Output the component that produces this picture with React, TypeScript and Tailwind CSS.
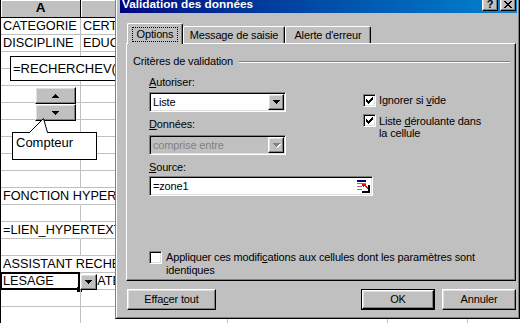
import React from "react";

const raised =
  "bg-[#c0c0c0] border border-t-white border-l-white border-r-black border-b-black shadow-[inset_-1px_-1px_#808080,inset_1px_1px_#dfdfdf]";
const sunken =
  "border border-t-[#808080] border-l-[#808080] border-r-white border-b-white shadow-[inset_1px_1px_#000,inset_-1px_-1px_#dfdfdf]";

type Row = { a?: string; b?: string; span?: boolean; sel?: boolean };

const rows: Row[] = [
  { a: "CATEGORIE", b: "CERT" },
  { a: "DISCIPLINE", b: "EDUC" },
  {},
  {},
  {},
  {},
  {},
  {},
  {},
  {},
  { a: "FONCTION HYPER", span: true },
  {},
  { a: "=LIEN_HYPERTEXT", span: true },
  {},
  { a: "ASSISTANT RECHE", span: true },
  { a: "LESAGE", b: "CATE", sel: true },
  {},
  {},
];

function DownTri({ color = "#000" }: { color?: string }) {
  return (
    <svg width="7" height="4" viewBox="0 0 7 4" shapeRendering="crispEdges">
      <path d="M0 0h7v1h-7zM1 1h5v1h-5zM2 2h3v1h-3zM3 3h1v1h-1z" fill={color} />
    </svg>
  );
}

function UpTri() {
  return (
    <svg width="7" height="4" viewBox="0 0 7 4" shapeRendering="crispEdges">
      <path d="M3 0h1v1h-1zM2 1h3v1h-3zM1 2h5v1h-5zM0 3h7v1h-7z" fill="#000" />
    </svg>
  );
}

function Check() {
  return (
    <svg width="7" height="7" viewBox="0 0 7 7" shapeRendering="crispEdges">
      <path
        d="M6 0h1v1h-1zM5 1h2v1h-2zM0 2h1v1h-1zM4 2h3v1h-3zM0 3h2v1h-2zM3 3h3v1h-3zM0 4h5v1h-5zM1 5h3v1h-3zM2 6h1v1h-1z"
        fill="#000"
      />
    </svg>
  );
}

function CheckBox({ on }: { on?: boolean }) {
  return (
    <div className={`w-[13px] h-[13px] shrink-0 bg-white flex items-center justify-center ${sunken}`}>
      {on && <Check />}
    </div>
  );
}

function RefIcon() {
  return (
    <svg width="15" height="15" viewBox="0 0 15 15" shapeRendering="crispEdges">
      <rect x="1" y="1" width="9" height="2" fill="#000080" />
      <rect x="1" y="4" width="9" height="1" fill="#808080" />
      <rect x="1" y="7" width="5" height="1" fill="#808080" />
      <rect x="1" y="10" width="5" height="1" fill="#808080" />
      <polygon points="6,5 10,5 9,6 12,9 11,10 8,7 7,8" fill="#ff0000" />
      <rect x="12" y="6" width="2" height="8" fill="#000" />
      <rect x="6" y="12" width="8" height="2" fill="#000" />
    </svg>
  );
}

function Head({ w, bold, children }: { w: string; bold?: boolean; children?: React.ReactNode }) {
  return (
    <div
      className={`${w} shrink-0 h-full bg-[#c0c0c0] border-r border-b border-black shadow-[inset_1px_1px_#fff] flex items-center justify-center text-[13.5px] ${bold ? "font-bold" : ""}`}
    >
      {children}
    </div>
  );
}

function Sheet() {
  return (
    <div className="flex flex-col h-full border-l border-black">
      <div className="flex h-[18px] shrink-0">
        <Head w="w-[80px]" bold>
          A
        </Head>
        <Head w="w-[147px]" />
        <Head w="w-[160px]" />
        <Head w="w-[80px]" />
        <Head w="flex-1" />
      </div>
      {rows.map((r, i) => (
        <div key={i} className="relative flex h-[17px] shrink-0 text-[12.7px] leading-[16px]">
          <div
            className={`w-[80px] shrink-0 border-b border-b-[#c0c0c0] pl-[2px] whitespace-nowrap ${
              r.span ? "border-r border-r-transparent" : "border-r border-r-[#c0c0c0] overflow-hidden"
            }`}
          >
            {r.a}
          </div>
          <div
            className={`w-[147px] shrink-0 border-b border-r border-[#c0c0c0] whitespace-nowrap overflow-hidden ${
              r.sel ? "pl-[7px]" : "pl-[2px]"
            }`}
          >
            {r.b}
          </div>
          <div className="w-[160px] shrink-0 border-b border-r border-[#c0c0c0]" />
          <div className="w-[80px] shrink-0 border-b border-r border-[#c0c0c0]" />
          <div className="flex-1 border-b border-[#c0c0c0]" />
          {r.sel && (
            <>
              <div className="absolute left-[-1px] top-[-1px] w-[80px] h-[18px] border-2 border-black" />
              <div className="absolute left-[76px] top-[14px] w-[5px] h-[5px] bg-black" />
              <div className={`absolute left-[79px] top-[1px] w-[17px] h-[16px] flex items-center justify-center ${raised}`}>
                <DownTri />
              </div>
            </>
          )}
        </div>
      ))}
    </div>
  );
}

function SheetObjects() {
  return (
    <>
      {/* formula text box */}
      <div className="absolute left-[10px] top-[56px] w-[120px] h-[25px] border border-black bg-white pl-[2px] text-[13px] leading-[23px] whitespace-nowrap">
        =RECHERCHEV(
      </div>
      {/* spin button */}
      <div className="absolute left-[35px] top-[87px] w-[41px] flex flex-col">
        <div className={`h-[17px] flex items-center justify-center ${raised}`}>
          <UpTri />
        </div>
        <div className={`h-[17px] flex items-center justify-center ${raised}`}>
          <DownTri />
        </div>
      </div>
      {/* callout */}
      <div className="absolute left-[12px] top-[132px] w-[85px] h-[28px] border border-black bg-white pl-[3px] pt-[1px] text-[13px] leading-[17px]">
        Compteur
      </div>
      <svg className="absolute left-[27px] top-[116px]" width="23" height="18" viewBox="0 0 23 18">
        <rect x="3" y="16" width="17" height="1" fill="#fff" />
        <path d="M2.5 16.5 L16.5 2.5 L20.5 16.5" fill="#fff" stroke="#000" strokeWidth="1" />
      </svg>
    </>
  );
}

function Combo({ text, disabled }: { text: string; disabled?: boolean }) {
  return (
    <div className={`h-[20px] flex items-center ${sunken} ${disabled ? "bg-[#c0c0c0]" : "bg-white"}`}>
      <span className={`flex-1 pl-[3px] ${disabled ? "text-[#808080]" : ""}`}>{text}</span>
      <div className={`w-[16px] h-[16px] mr-[1px] flex items-center justify-center ${raised}`}>
        {disabled ? (
          <div className="relative w-[7px] h-[4px]">
            <div className="absolute left-[1px] top-[1px]">
              <DownTri color="#fff" />
            </div>
            <div className="absolute left-0 top-0">
              <DownTri color="#808080" />
            </div>
          </div>
        ) : (
          <DownTri />
        )}
      </div>
    </div>
  );
}

function Btn({ w, children, def }: { w: string; children: React.ReactNode; def?: boolean }) {
  if (def)
    return (
      <div className={`${w} h-[21px] border border-black`}>
        <div className={`h-full flex items-center justify-center ${raised}`}>{children}</div>
      </div>
    );
  return <div className={`${w} h-[21px] flex items-center justify-center ${raised}`}>{children}</div>;
}

function Dialog() {
  return (
    <div className="absolute left-[115px] top-[-9px] w-[405px] h-[328px] z-10 bg-[#c0c0c0] border border-t-[#dfdfdf] border-l-[#808080] border-r-black border-b-black">
      <div className="h-full flex flex-col pl-[3px] pr-[1px] pt-[2px] border border-t-white border-l-white border-r-[#808080] border-b-[#808080] text-[11px] leading-[13px] tracking-[-0.15px]">
        {/* title bar */}
        <div className="h-[18px] shrink-0 flex items-center bg-linear-to-r from-[#000080] to-[#1084d0] pl-[2px] pr-[1px]">
          <span className="text-white font-bold text-[11.8px] tracking-normal pt-[1px]">Validation des données</span>
          <div className={`ml-auto w-[16px] h-[14px] flex items-center justify-center font-bold text-[11px] ${raised}`}>?</div>
          <div className={`ml-[2px] w-[16px] h-[14px] flex items-center justify-center ${raised}`}>
            <svg width="8" height="7" viewBox="0 0 8 7" shapeRendering="crispEdges">
              <path
                d="M0 0h2v1h-2zM6 0h2v1h-2zM1 1h2v1h-2zM5 1h2v1h-2zM2 2h4v1h-4zM3 3h2v1h-2zM2 4h4v1h-4zM1 5h2v1h-2zM5 5h2v1h-2zM0 6h2v1h-2zM6 6h2v1h-2z"
                fill="#000"
              />
            </svg>
          </div>
        </div>

        {/* tabs */}
        <div className="mt-[10px] ml-[7px] h-[20px] flex items-end">
          <div className="relative z-10 -mb-px w-[56px] h-[21px] bg-[#c0c0c0] border-t border-l border-white border-r border-r-black shadow-[inset_-1px_0_#808080] rounded-t-[2px] flex items-center justify-center">
            <span className="outline-1 outline-dotted outline-black px-[4px]">Options</span>
          </div>
          <div className="w-[102px] h-[17px] bg-[#c0c0c0] border-t border-l border-white border-r border-r-black shadow-[inset_-1px_0_#808080] rounded-t-[2px] flex items-center justify-center">
            Message de saisie
          </div>
          <div className="w-[86px] h-[17px] bg-[#c0c0c0] border-t border-l border-white border-r border-r-black shadow-[inset_-1px_0_#808080] rounded-t-[2px] flex items-center justify-center">
            Alerte d'erreur
          </div>
        </div>

        {/* tab panel */}
        <div className="ml-[6px] w-[390px] h-[238px] shrink-0 flex flex-col border border-t-white border-l-white border-r-black border-b-black shadow-[inset_-1px_-1px_#808080]">
          <div className="mt-[11px] flex items-center pl-[6px] pr-[5px]">
            <span>Critères de validation</span>
            <div className="flex-1 ml-[6px] h-[2px] border-t border-t-[#808080] border-b border-b-white" />
          </div>

          <div className="mt-[8px] pl-[22px] flex">
            <div className="w-[137px] flex flex-col">
              <span>
                <span className="underline">A</span>utoriser:
              </span>
              <div className="mt-[3px]">
                <Combo text="Liste" />
              </div>
              <span className="mt-[6px]">
                <span className="underline">D</span>onnées:
              </span>
              <div className="mt-[4px]">
                <Combo text="comprise entre" disabled />
              </div>
            </div>
            <div className="ml-[77px] pt-[18px] flex flex-col">
              <div className="flex items-start">
                <CheckBox on />
                <span className="ml-[3px]">
                  Ignorer si <span className="underline">v</span>ide
                </span>
              </div>
              <div className="mt-[7px] flex items-start">
                <CheckBox on />
                <span className="ml-[3px] leading-[12px] pt-[1px]">
                  Liste <span className="underline">d</span>éroulante dans
                  <br />
                  la cellule
                </span>
              </div>
            </div>
          </div>

          <div className="pl-[22px] flex flex-col">
            <span className="mt-[6px]">
              <span className="underline">S</span>ource:
            </span>
            <div className={`mt-[2px] w-[224px] h-[20px] bg-white flex items-center ${sunken}`}>
              <span className="flex-1 pl-[3px]">=zone1</span>
              <div className="mr-[1px] flex items-center">
                <RefIcon />
              </div>
            </div>
            <div className="mt-[55px] flex items-start">
              <CheckBox />
              <span className="ml-[4px]">
                Appliquer ces modifi<span className="underline">c</span>ations aux cellules dont les paramètres sont
                <br />
                identiques
              </span>
            </div>
          </div>
        </div>

        {/* buttons */}
        <div className="mt-[8px] ml-[7px] flex">
          <Btn w="w-[89px]">
            Effa<span className="underline">c</span>er tout
          </Btn>
          <div className="ml-[145px]">
            <Btn w="w-[74px]" def>
              OK
            </Btn>
          </div>
          <div className="ml-[7px]">
            <Btn w="w-[74px]">Annuler</Btn>
          </div>
        </div>
      </div>
    </div>
  );
}

export default function App() {
  return (
    <div className="relative w-[520px] h-[323px] overflow-hidden bg-white text-black font-['Liberation_Sans',Arial,sans-serif]">
      <Sheet />
      <SheetObjects />
      <Dialog />
    </div>
  );
}
